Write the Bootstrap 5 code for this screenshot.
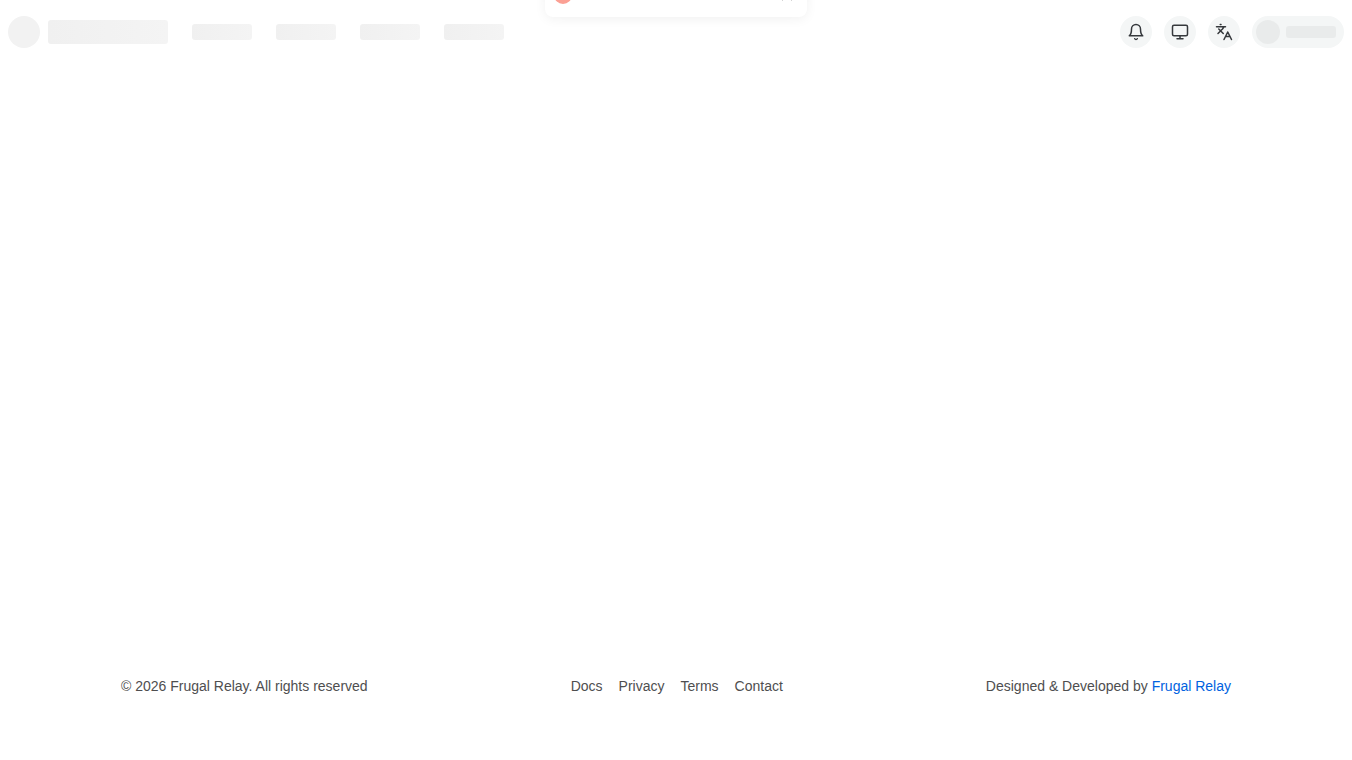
<!DOCTYPE html>
<html lang="en">
<head>
<meta charset="utf-8">
<meta name="viewport" content="width=device-width, initial-scale=1">
<title>Frugal Relay</title>
<link href="https://cdn.jsdelivr.net/npm/bootstrap@5.3.0/dist/css/bootstrap.min.css" rel="stylesheet">
<style>
body { font-family: "Liberation Sans", Arial, sans-serif; font-size: 14px; line-height: 20px; color: #4e4e4f; background: #fff; }
.skeleton { display: block; border-radius: 3px; background: linear-gradient(90deg, #f0f0f0, #f4f4f4); }
.skeleton-logo { width: 32px; height: 32px; border-radius: 50%; background: #f2f2f2; }
.skeleton-title { width: 120px; height: 24px; }
.skeleton-link { width: 60px; height: 16px; }
.site-header { height: 64px; }
.header-tools { gap: 12px; }
.site-footer a { color: inherit; }
.icon-btn { width: 32px; height: 32px; border: 0; border-radius: 50%; background: #f4f6f6; color: #35383c; }
.icon-btn:hover { background: #eceeee; }
.user-pill { gap: 6px; height: 32px; padding: 0 8px 0 4px; border-radius: 16px; background: #f4f6f6; }
.user-avatar { width: 24px; height: 24px; border-radius: 50%; background: #e9ebeb; }
.user-name { width: 50px; height: 12px; background: #e9ebeb; }
.notice { top: -27px; left: 50%; width: 262px; height: 44px; margin-left: -131px; padding: 0 11px 0 9px; border-radius: 8px; background: #fff; box-shadow: 0 2px 12px rgba(0, 0, 0, .06); z-index: 10; }
.notice-close { border: 0; background: none; color: #aaa; }
.footer-row { max-width: 1110px; }
.site-footer { padding: 24px 12px 64px; }
.site-footer .brand-link { color: #0062df; }
</style>
</head>
<body class="d-flex flex-column min-vh-100 position-relative overflow-x-hidden">
<div class="notice position-absolute d-flex align-items-center justify-content-between" role="alert">
  <svg width="18" height="18" viewBox="0 0 18 18" aria-hidden="true"><circle cx="9" cy="9" r="9" fill="#fba094"/><path d="M9 4v6M9 12v2" stroke="#fff" stroke-width="2"/></svg>
  <button class="notice-close p-0 d-flex" type="button" aria-label="Close"><svg width="18" height="14" viewBox="0 0 18 14" fill="none" stroke="currentColor"><path d="m4.5 3.5 9 9m0-9-9 9"/></svg></button>
</div>
<header class="site-header d-flex align-items-center justify-content-between px-2">
  <div class="d-flex align-items-center gap-4">
    <div class="d-flex align-items-center gap-2"><span class="skeleton skeleton-logo"></span><span class="skeleton skeleton-title"></span></div>
    <span class="skeleton skeleton-link"></span>
    <span class="skeleton skeleton-link"></span>
    <span class="skeleton skeleton-link"></span>
    <span class="skeleton skeleton-link"></span>
  </div>
  <div class="header-tools d-flex align-items-center">
    <button class="icon-btn p-0 d-flex align-items-center justify-content-center" type="button" aria-label="Notifications"><svg width="18" height="18" viewBox="0 0 24 24" fill="none" stroke="currentColor" stroke-width="2" stroke-linecap="round" stroke-linejoin="round"><path d="M6 8a6 6 0 0 1 12 0c0 7 3 9 3 9H3s3-2 3-9M10.3 21a1.94 1.94 0 0 0 3.4 0"/></svg></button>
    <button class="icon-btn p-0 d-flex align-items-center justify-content-center" type="button" aria-label="Theme"><svg width="18" height="18" viewBox="0 0 24 24" fill="none" stroke="currentColor" stroke-width="2" stroke-linecap="round" stroke-linejoin="round"><rect width="20" height="14" x="2" y="3" rx="2"/><path d="M8 21h8M12 17v4"/></svg></button>
    <button class="icon-btn p-0 d-flex align-items-center justify-content-center" type="button" aria-label="Language"><svg width="18" height="18" viewBox="0 0 24 24" fill="none" stroke="currentColor" stroke-width="2" stroke-linecap="round" stroke-linejoin="round"><path d="m5 8 6 6M4 14l6-6 2-3M2 5h12M7 2h1M22 22l-5-10-5 10M14 18h6"/></svg></button>
    <div class="user-pill d-flex align-items-center"><span class="user-avatar"></span><span class="skeleton user-name"></span></div>
  </div>
</header>
<main class="flex-grow-1"></main>
<footer class="site-footer">
  <div class="footer-row mx-auto d-flex flex-wrap align-items-center justify-content-between">
    <span>© 2026 Frugal Relay. All rights reserved</span>
    <nav class="d-flex gap-3" aria-label="Footer"><a class="text-decoration-none" href="#docs">Docs</a><a class="text-decoration-none" href="#privacy">Privacy</a><a class="text-decoration-none" href="#terms">Terms</a><a class="text-decoration-none" href="#contact">Contact</a></nav>
    <span>Designed &amp; Developed by <a class="brand-link text-decoration-none" href="#home">Frugal Relay</a></span>
  </div>
</footer>
<script src="https://cdn.jsdelivr.net/npm/bootstrap@5.3.0/dist/js/bootstrap.bundle.min.js"></script>
</body>
</html>
